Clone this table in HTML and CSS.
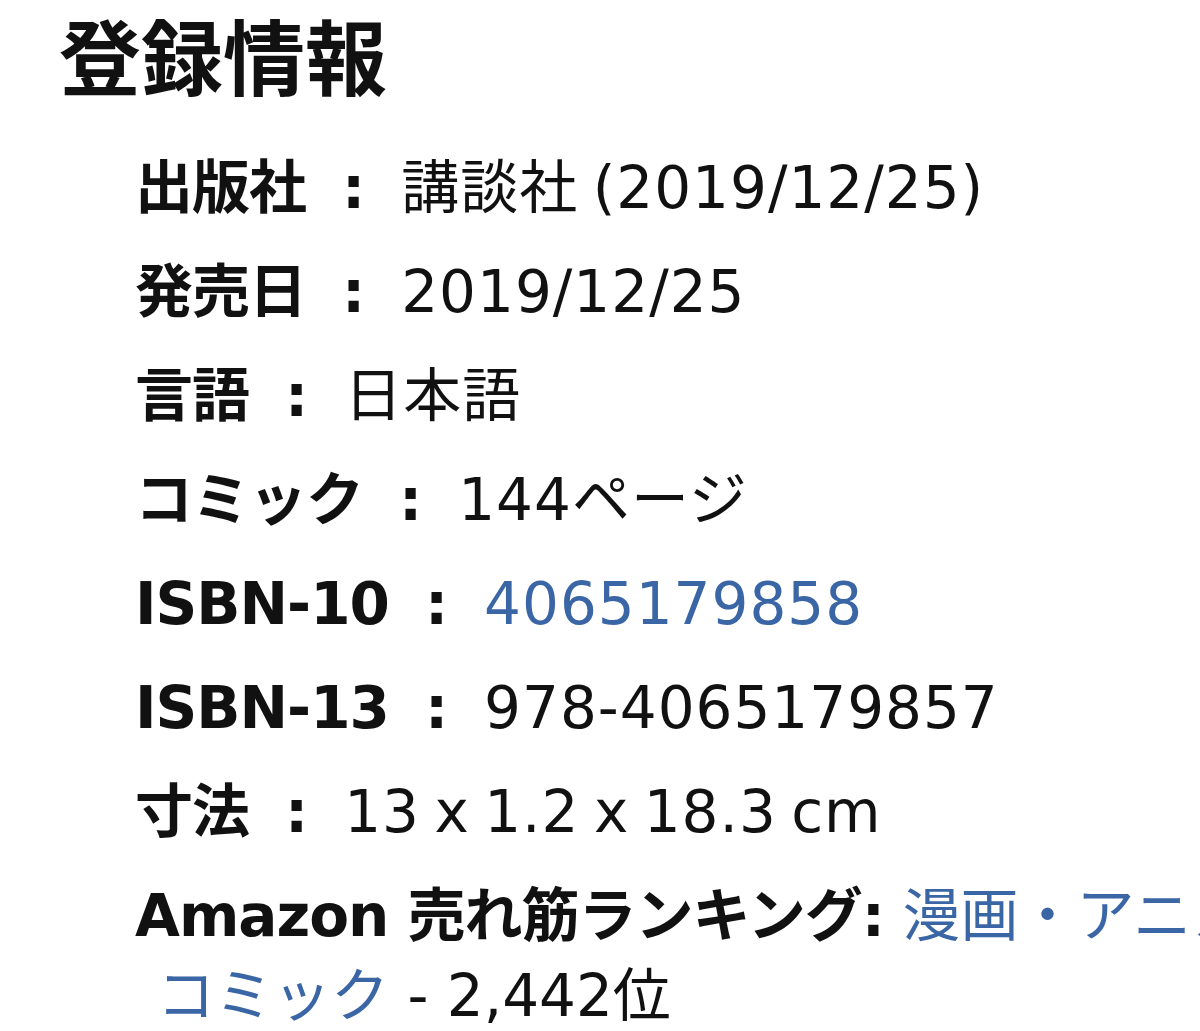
FILE: index.html
```html
<!DOCTYPE html>
<html lang="ja">
<head>
<meta charset="utf-8">
<title>登録情報</title>
<link rel="stylesheet" href="styles.css">
</head>
<body>
<div class="page">
  <h2 class="title">登録情報</h2>
  <ul class="details">
    <li class="row"><span class="label">出版社</span><span class="sep">:</span><span class="value">講談社 (2019/12/25)</span></li>
    <li class="row"><span class="label">発売日</span><span class="sep">:</span><span class="value">2019/12/25</span></li>
    <li class="row"><span class="label">言語</span><span class="sep">:</span><span class="value">日本語</span></li>
    <li class="row"><span class="label">コミック</span><span class="sep">:</span><span class="value">144ページ</span></li>
    <li class="row"><span class="label">ISBN-10</span><span class="sep">:</span><a class="value link" href="#">4065179858</a></li>
    <li class="row"><span class="label">ISBN-13</span><span class="sep">:</span><span class="value">978-4065179857</span></li>
    <li class="row"><span class="label">寸法</span><span class="sep">:</span><span class="value">13 x 1.2 x 18.3 cm</span></li>
    <li class="rank">
      <div class="rank-line"><span class="label">Amazon 売れ筋ランキング:</span> <a class="link" href="#">漫画・アニメ・BL</a></div>
      <div class="rank-sub"><a class="link" href="#">コミック</a> - 2,442位</div>
    </li>
  </ul>
</div>
</body>
</html>
```
FILE: styles.css
```css
html, body {
  margin: 0;
  padding: 0;
  background: #ffffff;
  overflow: hidden;
}

body {
  font-family: "DejaVu Sans", "Noto Sans CJK JP", sans-serif;
  color: #111111;
}

.page {
  padding: 11px 0 0 59px;
  width: 1400px;
}

.title {
  margin: 0;
  font-size: 82px;
  line-height: 100px;
  font-weight: 700;
}

.details {
  list-style: none;
  margin: 37px 0 0 0;
  padding: 0 0 0 76px;
}

.row {
  display: flex;
  align-items: baseline;
  font-size: 58px;
  line-height: 80px;
  height: 80px;
  margin-bottom: 24px;
  white-space: nowrap;
}

.label {
  font-weight: 700;
  letter-spacing: -1px;
}

.sep {
  font-weight: 700;
  margin: 0 36px;
}

.value {
  letter-spacing: 1px;
  word-spacing: -5px;
}

.link {
  color: #3b66a5;
  text-decoration: none;
}

.rank {
  font-size: 58px;
  line-height: 80px;
  white-space: nowrap;
}

.rank-sub {
  padding-left: 22px;
}
```
